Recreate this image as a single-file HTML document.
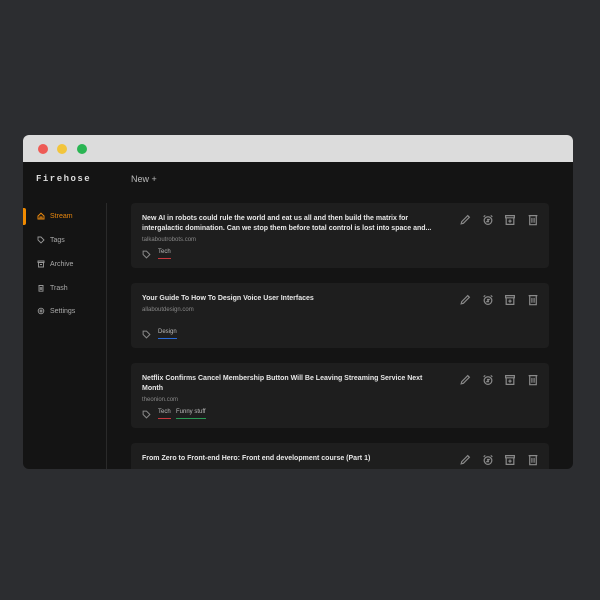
<!DOCTYPE html>
<html><head><style>
*{margin:0;padding:0;box-sizing:border-box}
body{width:600px;height:600px;background:#2c2d30;position:relative;overflow:hidden;font-family:"Liberation Sans",sans-serif}
.win{position:absolute;left:23px;top:135px;width:550px;height:334px;border-radius:6px;overflow:hidden;background:#141414}
.tb{position:absolute;left:0;top:0;width:550px;height:27px;background:#dcdcdc}
.dot{position:absolute;top:9px;width:10px;height:10px;border-radius:50%}
.a{position:absolute}
.logo{left:13px;top:39px;font-family:"Liberation Mono",monospace;font-size:9px;color:#ddd;letter-spacing:1.5px;font-weight:bold}
.new{left:108px;top:39px;font-size:9px;color:#bbb}
.div{left:83px;top:68px;width:1px;height:266px;background:#2a2a2a}
.nav{position:absolute;left:14px;font-size:7px;color:#aaa}
.nav svg{position:absolute;left:0;top:-1px}
.nav span{position:absolute;left:13px;top:0;white-space:nowrap}
.card{position:absolute;left:108px;width:418px;height:65px;background:#1e1e1e;border-radius:4px}
.t{position:absolute;left:11px;top:11px;width:300px;font-size:7px;font-weight:bold;color:#e8e8e8;line-height:10px;white-space:nowrap}
.u{position:absolute;left:11px;font-size:6px;color:#888}
.tag{position:absolute;font-size:6px;color:#bbb}
.tag i{position:absolute;left:0;right:0;top:8.5px;height:1.5px}
</style></head><body>
<div class="win">
<div class="tb"></div>
<div class="dot" style="left:15px;background:#ee5a55"></div>
<div class="dot" style="left:34px;background:#f2c53c"></div>
<div class="dot" style="left:54px;background:#2ab553"></div>
<div class="a logo">Firehose</div>
<div class="a new">New +</div>
<div class="a div"></div>
<div class="a" style="left:0;top:73px;width:3px;height:17px;background:#f08a00;border-radius:0 2px 2px 0"></div>
<div class="nav" style="top:78px;color:#e8870e"><svg width="8" height="8" viewBox="0 0 8 8" fill="none" stroke="#e8870e" stroke-width="1"><path d="M1 4L4 1.2L7 4V7H1Z M3 7V5H5V7"/></svg><span>Stream</span></div>
<div class="nav" style="top:102px"><svg width="8" height="8" viewBox="0 0 8 8" fill="none" stroke="#999" stroke-width="0.9"><path d="M1 1H4L7 4L4 7L1 4Z"/></svg><span>Tags</span></div>
<div class="nav" style="top:126px"><svg width="8" height="8" viewBox="0 0 8 8" fill="none" stroke="#999" stroke-width="0.9"><path d="M1 1H7V2.5H1Z M1.5 2.5V7H6.5V2.5 M3 4.5H5"/></svg><span>Archive</span></div>
<div class="nav" style="top:150px"><svg width="8" height="8" viewBox="0 0 8 8" fill="none" stroke="#999" stroke-width="0.9"><path d="M1.5 1.5H6.5 M2 1.5V7.2H6V1.5 M3.3 3V6 M4.7 3V6"/></svg><span>Trash</span></div>
<div class="nav" style="top:173px"><svg width="8" height="8" viewBox="0 0 8 8" fill="none" stroke="#999" stroke-width="0.9"><circle cx="4" cy="4" r="2.8"/><circle cx="4" cy="4" r="1"/></svg><span>Settings</span></div>

<div class="card" style="top:68px">
<div class="t">New AI in robots could rule the world and eat us all and then build the matrix for<br>intergalactic domination. Can we stop them before total control is lost into space and...</div>
<div class="u" style="top:34px">talkaboutrobots.com</div>
<svg class="a" style="left:11px;top:47px" width="9" height="9" viewBox="0 0 8 8" fill="none" stroke="#888" stroke-width="0.9"><path d="M1 1H4L7 4L4 7L1 4Z"/></svg>
<div class="tag" style="left:27px;top:46px">Tech<i style="background:#c8393e"></i></div>
</div>
<div class="card" style="top:148px">
<div class="t">Your Guide To How To Design Voice User Interfaces</div>
<div class="u" style="top:24px">allaboutdesign.com</div>
<svg class="a" style="left:11px;top:47px" width="9" height="9" viewBox="0 0 8 8" fill="none" stroke="#888" stroke-width="0.9"><path d="M1 1H4L7 4L4 7L1 4Z"/></svg>
<div class="tag" style="left:27px;top:46px">Design<i style="background:#2a6bd8"></i></div>
</div>
<div class="card" style="top:228px">
<div class="t">Netflix Confirms Cancel Membership Button Will Be Leaving Streaming Service Next<br>Month</div>
<div class="u" style="top:34px">theonion.com</div>
<svg class="a" style="left:11px;top:47px" width="9" height="9" viewBox="0 0 8 8" fill="none" stroke="#888" stroke-width="0.9"><path d="M1 1H4L7 4L4 7L1 4Z"/></svg>
<div class="tag" style="left:27px;top:46px">Tech<i style="background:#c8393e"></i></div>
<div class="tag" style="left:45px;top:46px">Funny stuff<i style="background:#2a9a55"></i></div>
</div>
<div class="card" style="top:308px">
<div class="t">From Zero to Front-end Hero: Front end development course (Part 1)</div>
</div>
</div>
<script>
var ys=[68,148,228,308];
var svg='<svg style="position:absolute;left:VVpx;top:TTpx" width="12" height="12" viewBox="0 0 11 11" fill="none" stroke="#8a8a8a" stroke-width="1.1">';
var icons=[
'<path d="M2 9L2.5 7L8 1.5L9.5 3L4 8.5Z"/>',
'<circle cx="5.5" cy="6" r="3.5"/><path d="M1.5 2.5L3 1.3 M9.5 2.5L8 1.3 M4.5 5H6.5L4.5 7H6.5"/>',
'<path d="M1.5 1.5H9.5V3.5H1.5Z M2 3.5V9.5H9V3.5 M5.5 5V8 M4 6.5H7"/>',
'<path d="M1.5 1.5H9.5 M2.5 1.5V9.8H8.5V1.5 M4.5 3.5V8 M6.5 3.5V8"/>'];
var xs=[436,459,481,504];
var w=document.querySelector('.win');
ys.forEach(function(y){icons.forEach(function(p,i){w.insertAdjacentHTML('beforeend',svg.replace('VV',xs[i]).replace('TT',y+11)+p+'</svg>');});});
</script>
</body></html>
